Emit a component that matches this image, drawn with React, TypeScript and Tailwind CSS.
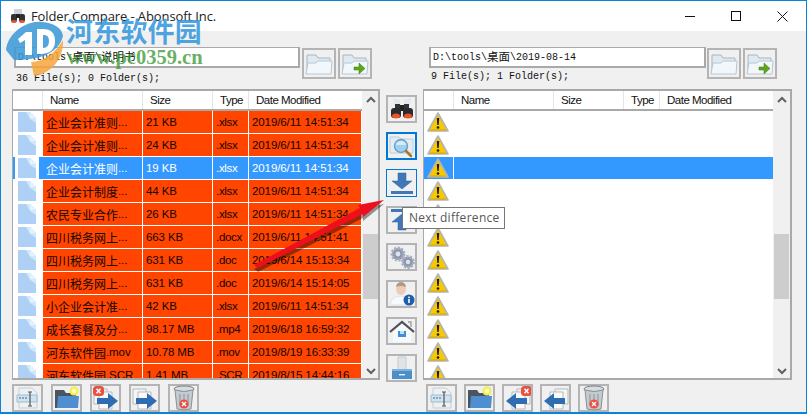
import React from "react";

const sans = "font-['Liberation_Sans','Noto_Sans_CJK_SC',sans-serif]";

const rows: [string, string, string, string][] = [
  ["企业会计准则...", "21 KB", ".xlsx", "2019/6/11 14:51:34"],
  ["企业会计准则...", "24 KB", ".xlsx", "2019/6/11 14:51:34"],
  ["企业会计准则...", "19 KB", ".xlsx", "2019/6/11 14:51:34"],
  ["企业会计制度...", "44 KB", ".xlsx", "2019/6/11 14:51:34"],
  ["农民专业合作...", "26 KB", ".xlsx", "2019/6/11 14:51:34"],
  ["四川税务网上...", "663 KB", ".docx", "2019/6/11 14:51:41"],
  ["四川税务网上...", "631 KB", ".doc", "2019/6/14 15:13:34"],
  ["四川税务网上...", "631 KB", ".doc", "2019/6/14 15:14:05"],
  ["小企业会计准...", "42 KB", ".xlsx", "2019/6/11 14:51:34"],
  ["成长套餐及分...", "98.17 MB", ".mp4", "2019/6/18 16:59:32"],
  ["河东软件园.mov", "10.78 MB", ".mov", "2019/8/19 16:33:39"],
  ["河东软件园.SCR", "1.41 MB", ".SCR", "2019/8/15 14:44:16"],
];

const grid = "grid grid-cols-[30px_100px_70px_36px_113px]";

function FileIcon() {
  return (
    <svg width="20" height="22" viewBox="0 0 20 22">
      <path d="M1 1h12l6 6v14H1z" fill="#aed0f4" />
      <path d="M9 1h4l6 6v5L13 8z" fill="#cfe8fb" />
      <path d="M13 1l6 6h-6z" fill="#e4f4fe" />
    </svg>
  );
}

function Warn() {
  return (
    <svg width="22" height="20" viewBox="0 0 22 20">
      <path d="M11 1L21 19H1z" fill="#f6c900" stroke="#b4b4b4" strokeWidth="1.6" strokeLinejoin="round" />
      <path d="M3 18h16" stroke="#d8a800" strokeWidth="1" />
      <path d="M9.8 6h2.4l-.5 7h-1.4z" fill="#1a1a1a" />
      <circle cx="11" cy="15.5" r="1.3" fill="#1a1a1a" />
    </svg>
  );
}

function Folder({ arrow }: { arrow?: boolean }) {
  return (
    <svg width="28" height="24" viewBox="0 0 28 24">
      <path d="M2 21V3h9l2 3h12v15z" fill="#dfe9f1" stroke="#a8b6c2" />
      <path d="M1 22l2-11h8l2-2h14l-1 13z" fill="#f2f7fb" stroke="#b8c6d2" />
      {arrow && <path d="M13 15h5v-4l6 5.5-6 5.5v-4h-5z" fill="#5fa51e" stroke="#3f7d10" strokeWidth="0.5" />}
    </svg>
  );
}

function Binoculars() {
  return (
    <svg width="24" height="24" viewBox="0 0 24 24">
      <path d="M3 1l7 2v5H4zM21 1l-7 2v5h6z" fill="#dfe8f0" />
      <path d="M5 7h5v5H5zM14 7h5v5h-5z" fill="#333" />
      <path d="M10 8h4v6h-4z" fill="#222" />
      <rect x="1" y="11" width="10" height="10" rx="3" fill="#2b2b2b" />
      <rect x="13" y="11" width="10" height="10" rx="3" fill="#2b2b2b" />
      <ellipse cx="6" cy="19" rx="4" ry="2.5" fill="#e8542b" />
      <ellipse cx="18" cy="19" rx="4" ry="2.5" fill="#e8542b" />
    </svg>
  );
}

function Magnifier() {
  return (
    <svg width="26" height="24" viewBox="0 0 26 24">
      <path d="M1 3h9l2 2h12v14H1z" fill="#e3ecf3" stroke="#c2ccd6" />
      <circle cx="12" cy="12" r="6.5" fill="#9fd0f3" stroke="#6d9fc5" strokeWidth="1.4" />
      <path d="M7 11a5 4 0 0 1 10 0z" fill="#d5edfb" />
      <path d="M17 17l5 5" stroke="#a8792f" strokeWidth="2.6" strokeLinecap="round" />
    </svg>
  );
}

function Down({ up }: { up?: boolean }) {
  return (
    <svg width="24" height="22" viewBox="0 0 24 22" className={up ? "rotate-180" : ""}>
      <path d="M8 1h8v8h6L12 17 2 9h6z" fill="#3f77b8" stroke="#2f639f" strokeWidth="0.5" />
      <path d="M1 19h22v3H1z" fill="#3f77b8" />
    </svg>
  );
}

function Gears() {
  return (
    <svg width="26" height="24" viewBox="0 0 26 24">
      <circle cx="9" cy="9" r="6" fill="#8f97ac" stroke="#a8afc0" strokeWidth="3" strokeDasharray="2 1.4" />
      <circle cx="9" cy="9" r="2.4" fill="#dfe3ea" />
      <circle cx="19" cy="17" r="5.5" fill="#8f97ac" stroke="#a8afc0" strokeWidth="3" strokeDasharray="2 1.4" />
      <circle cx="19" cy="17" r="2.2" fill="#dfe3ea" />
    </svg>
  );
}

function Person() {
  return (
    <svg width="26" height="24" viewBox="0 0 26 24">
      <ellipse cx="12" cy="7" rx="5" ry="6" fill="#e9cdb8" />
      <path d="M7 5a5 5 0 0 1 10 0q-5-2-10 0z" fill="#b09a86" />
      <path d="M1 23q1-9 11-9t10 9z" fill="#f7f9fb" stroke="#dde3e8" />
      <circle cx="20" cy="18" r="5.5" fill="#1f5ea8" />
      <rect x="19.2" y="17" width="1.6" height="4" fill="#fff" />
      <rect x="19.2" y="14.6" width="1.6" height="1.6" fill="#fff" />
    </svg>
  );
}

function Home() {
  return (
    <svg width="26" height="24" viewBox="0 0 26 24">
      <path d="M4 11l9-8 9 8v12H4z" fill="#f8f9fb" />
      <path d="M1 13L13 3l12 10" fill="none" stroke="#4b5258" strokeWidth="2.2" />
      <path d="M19 3h3v5" fill="none" stroke="#9aa0a6" strokeWidth="1.4" />
      <path d="M9 12h8v6H9z" fill="#3f8fd6" />
      <path d="M11 12h4v3h-4z" fill="#bfe0f7" />
    </svg>
  );
}

function Usb() {
  return (
    <svg width="22" height="24" viewBox="0 0 22 24">
      <path d="M7 1h8v13H7z" fill="#dfe3e6" stroke="#c5cacf" />
      <path d="M1 13h20v10H1z" fill="#4b8fc9" />
      <path d="M1 13h20v2H1z" fill="#7fb3dc" />
      <path d="M8 18h6v1.4H8z" fill="#e7f1f9" />
    </svg>
  );
}

function Rename() {
  return (
    <svg width="24" height="24" viewBox="0 0 24 24">
      <path d="M3 2h13l5 5v15H3z" fill="#eef1f3" stroke="#c8cdd1" />
      <path d="M1 9h20v7H1z" fill="#cfe3f0" stroke="#9fbcd0" />
      <path d="M3 12h8" stroke="#6f93ad" strokeWidth="1.4" strokeDasharray="2 1" />
      <path d="M14 6v14M12 6h4M12 20h4" stroke="#555" strokeWidth="1.2" />
    </svg>
  );
}

function NewFolder() {
  return (
    <svg width="26" height="24" viewBox="0 0 26 24">
      <path d="M1 22V4h9l2 3h10v15z" fill="#4a5560" />
      <path d="M3 22l1-12h21l-1 12z" fill="#4f8ed0" />
      <circle cx="20" cy="5" r="4.6" fill="#f3ec58" />
      <circle cx="20" cy="5" r="2.4" fill="#fdfbb0" />
    </svg>
  );
}

function Pages({ dir, x }: { dir: "left" | "right"; x?: boolean }) {
  const right = dir === "right";
  return (
    <svg width="26" height="24" viewBox="0 0 26 24">
      <g transform={right ? undefined : "translate(26 0) scale(-1 1)"}>
        <path d="M1 3h13v15H1z" fill="#f4f5f6" stroke="#b5b9bd" />
        <path d="M6 6h13v17H6z" fill="#fafafa" stroke="#b5b9bd" />
        <path d="M4 12h11V7l10 8-10 8v-5H4z" fill="#2f6db3" />
      </g>
      {x && (
        <g transform={right ? "translate(-1 0)" : "translate(15 0)"}>
          <rect x="1" y="0" width="11" height="10" rx="3.5" fill="#e9503f" />
          <path d="M4.5 2.7l4 4.6M8.5 2.7l-4 4.6" stroke="#fff" strokeWidth="1.5" />
        </g>
      )}
    </svg>
  );
}

function Trash() {
  return (
    <svg width="22" height="26" viewBox="0 0 22 26">
      <ellipse cx="11" cy="4" rx="10" ry="3" fill="#d9dde0" stroke="#7c8287" />
      <path d="M2 5l2 19q7 2 14 0l2-19q-9 3-18 0z" fill="#c4cbd0" stroke="#8b9196" />
      <path d="M7 9v12M11 9v13M15 9v12" stroke="#8b9196" />
      <circle cx="11" cy="19" r="4.6" fill="#e9503f" />
      <path d="M9 17l4 4M13 17l-4 4" stroke="#fff" strokeWidth="1.3" />
    </svg>
  );
}

function Btn({ children, w = "w-[31px]", h = "h-[28px]", cls = "border-[#b4b4b4] border-2" }: { children: React.ReactNode; w?: string; h?: string; cls?: string }) {
  return <div className={`${w} ${h} shrink-0 flex items-center justify-center bg-[#f0f0f0] ${cls}`}>{children}</div>;
}

function Header() {
  const cell = "flex items-center border-r border-[#e5e5e5] h-full pt-[2px]";
  return (
    <div className={`${grid} h-[18px] bg-white border-b-2 border-[#a9a9a9] box-content text-[11.5px] tracking-[-0.5px] text-[#111] leading-none`}>
      <div className={cell} />
      <div className={`${cell} pl-[7px]`}>Name</div>
      <div className={`${cell} pl-[7px]`}>Size</div>
      <div className={`${cell} pl-[7px]`}>Type</div>
      <div className="flex items-center pl-[7px] h-full pt-[2px]">Date Modified</div>
    </div>
  );
}

function Scrollbar() {
  return (
    <div className="w-[17px] shrink-0 bg-[#f0f0f0] flex flex-col items-center text-[#606060]">
      <svg width="10" height="8" viewBox="0 0 10 8" className="mt-[5px] shrink-0"><path d="M1 6l4-4 4 4" fill="none" stroke="#606060" strokeWidth="2" /></svg>
      <div className="w-[15px] h-[65px] bg-[#cdcdcd] mt-[130px] shrink-0" />
      <div className="flex-1" />
      <svg width="10" height="8" viewBox="0 0 10 8" className="mb-[3px] shrink-0"><path d="M1 2l4 4 4-4" fill="none" stroke="#606060" strokeWidth="2" /></svg>
    </div>
  );
}

function Name({ text }: { text: string }) {
  const i = text.search(/\.[.a-zA-Z]/);
  return (
    <>
      <span className="text-[12px] tracking-normal font-['Noto_Sans_CJK_SC',sans-serif]">{text.slice(0, i)}</span>
      <span>{text.slice(i)}</span>
    </>
  );
}

function LeftList() {
  return (
    <div className={`h-[291px] w-[368px] border-2 border-[#a9a9a9] border-l-1 flex overflow-hidden bg-white ${sans}`}>
      <div className="w-[349px] shrink-0 flex flex-col overflow-hidden">
        <Header />
        <div className="overflow-hidden flex-1">
          {rows.map((r, i) => {
            const sel = i === 2;
            const c = `${sel ? "bg-[#3399ff] text-white" : "bg-[#ff4500] text-[#140600]"} border-r border-b border-white flex items-center pl-[3px] pt-[1px] h-[23px] whitespace-nowrap overflow-hidden text-[11.5px] tracking-[-0.1px]`;
            return (
              <div key={i} className={grid}>
                <div className={`h-[23px] flex border-b border-white pl-[2px] pr-[4px] ${sel ? "bg-[#3399ff]" : ""}`}>
                  <div className="w-[24px] bg-white flex items-center justify-center"><FileIcon /></div>
                </div>
                <div className={c}><Name text={r[0]} /></div>
                <div className={c}>{r[1]}</div>
                <div className={`${c} tracking-[-0.3px]`}>{r[2]}</div>
                <div className={c}>{r[3]}</div>
              </div>
            );
          })}
        </div>
      </div>
      <Scrollbar />
    </div>
  );
}

function RightList() {
  return (
    <div className={`h-[291px] w-[369px] border-2 border-[#a9a9a9] border-l-1 flex overflow-hidden bg-white ${sans}`}>
      <div className="w-[349px] shrink-0 flex flex-col overflow-hidden">
        <Header />
        <div className="overflow-hidden flex-1">
          {rows.map((_, i) => (
            <div key={i} className={`${grid} h-[23px] border-b border-white ${i === 2 ? "bg-[#3399ff]" : "bg-white"}`}>
              <div className="flex items-center justify-center border-r border-white pr-[1px]"><Warn /></div>
            </div>
          ))}
        </div>
      </div>
      <Scrollbar />
    </div>
  );
}

const mono = "font-['Liberation_Mono','Noto_Sans_CJK_SC',monospace] text-[10px] text-[#111]";

export default function App() {
  return (
    <div className="relative w-[807px] h-[414px] overflow-hidden bg-[#f0f0f0] border border-b-2 border-[#0a84d8] flex flex-col">
      {/* title bar */}
      <div className="h-[30px] bg-white flex items-center shrink-0 pl-[9px]">
        <svg width="16" height="16" viewBox="0 0 16 16">
          <path d="M4 1h8v5H4z" fill="#ccd3d9" />
          <rect x="1" y="6" width="6" height="8" rx="2" fill="#333" />
          <rect x="9" y="6" width="6" height="8" rx="2" fill="#333" />
          <path d="M6 6h4v4H6z" fill="#222" />
          <ellipse cx="4" cy="13.5" rx="2.8" ry="1.6" fill="#e8542b" />
          <ellipse cx="12" cy="13.5" rx="2.8" ry="1.6" fill="#e8542b" />
        </svg>
        <span className="ml-[5px] mt-[1px] text-[13px] text-[#222] tracking-[-0.1px] font-['Open_Sans',sans-serif]">Folder Compare - Abonsoft Inc.</span>
        <div className="ml-auto flex items-center mr-[1px]">
          <div className="w-[46px] flex justify-center"><div className="w-[10px] h-px bg-[#111]" /></div>
          <div className="w-[46px] flex justify-center"><div className="w-[10px] h-[10px] border border-[#111]" /></div>
          <div className="w-[46px] flex justify-center">
            <svg width="11" height="11" viewBox="0 0 11 11"><path d="M.5.5l10 10M10.5.5l-10 10" stroke="#111" strokeWidth="1" /></svg>
          </div>
        </div>
      </div>

      {/* body */}
      <div className="flex flex-1 pl-[11px] min-h-0">
        {/* left column */}
        <div className="w-[368px] flex flex-col shrink-0 pt-[16px]">
          <div className="flex h-[42px] pl-[2px]">
            <div className="w-[286px] flex flex-col">
              <div className={`h-[21px] shrink-0 border-2 border-[#a9a9a9] border-t-1 bg-white flex items-center pl-[2px] ${mono}`}>D:\tools\<span className="text-[11.5px] font-['Noto_Sans_CJK_SC',sans-serif]">桌面</span>\<span className="text-[11.5px] font-['Noto_Sans_CJK_SC',sans-serif]">说明书</span></div>
              <div className={`pl-[2px] mt-[5px] leading-[12px] ${mono}`}>36 File(s); 0 Folder(s);</div>
            </div>
            <div className="flex gap-[2px] ml-[2px] mt-[1px]">
              <Btn w="w-[34px]" h="h-[31px]"><Folder /></Btn>
              <Btn w="w-[34px]" h="h-[31px]"><Folder arrow /></Btn>
            </div>
          </div>
          <LeftList />
          <div className="flex gap-[8px] mt-[4px]">
            <Btn><Rename /></Btn>
            <Btn><NewFolder /></Btn>
            <Btn><Pages dir="right" x /></Btn>
            <Btn><Pages dir="right" /></Btn>
            <Btn><Trash /></Btn>
          </div>
        </div>

        {/* middle column */}
        <div className="w-[31px] ml-[6px] shrink-0 flex flex-col gap-[9px] pt-[64px]">
          <Btn><Binoculars /></Btn>
          <Btn cls="border-2 border-[#0078d7]"><Magnifier /></Btn>
          <Btn cls="border-1 border-[#0078d7] bg-[#e5f1fb]"><Down /></Btn>
          <Btn><Down up /></Btn>
          <Btn><Gears /></Btn>
          <Btn><Person /></Btn>
          <Btn><Home /></Btn>
          <Btn><Usb /></Btn>
        </div>

        {/* right column */}
        <div className="w-[369px] ml-[6px] flex flex-col shrink-0 pt-[16px]">
          <div className="flex h-[42px] pl-[6px]">
            <div className="w-[277px] flex flex-col">
              <div className={`h-[21px] shrink-0 border-2 border-[#a9a9a9] border-t-1 bg-white flex items-center pl-[2px] ${mono}`}>D:\tools\<span className="text-[11.5px] font-['Noto_Sans_CJK_SC',sans-serif]">桌面</span>\2019-08-14</div>
              <div className={`pl-[2px] mt-[3px] leading-[12px] ${mono}`}>9 File(s); 1 Folder(s);</div>
            </div>
            <div className="flex gap-[2px] ml-[1px] mt-[1px]">
              <Btn w="w-[34px]" h="h-[31px]"><Folder /></Btn>
              <Btn w="w-[34px]" h="h-[31px]"><Folder arrow /></Btn>
            </div>
          </div>
          <RightList />
          <div className="flex gap-[7px] mt-[4px] pl-[3px]">
            <Btn><Rename /></Btn>
            <Btn><NewFolder /></Btn>
            <Btn><Pages dir="left" x /></Btn>
            <Btn><Pages dir="left" /></Btn>
            <Btn><Trash /></Btn>
          </div>
        </div>
      </div>

      {/* red annotation arrow */}
      <svg className="absolute left-[239px] top-[184px]" width="160" height="95" viewBox="0 0 160 95">
        <path d="M14 80L120 23L118 20L144 15L123 32L123 29L18 83Z" fill="#000" opacity="0.4" transform="translate(0 4)" />
        <path d="M14 80L120 23L118 20L144 15L123 32L123 29L18 83Z" fill="#ee0f1c" />
      </svg>

      {/* tooltip */}
      <div className="absolute left-[401px] top-[206px] w-[103px] h-[22px] bg-white border border-[#767676] flex items-center pl-[6px] text-[12px] text-[#575757] tracking-[0.3px] whitespace-nowrap font-['Open_Sans',sans-serif]">Next difference</div>

      {/* watermark */}
      <svg className="absolute left-[3px] top-[13px]" width="62" height="64" viewBox="0 0 62 64">
        <path d="M2 36C4 18 24 6 38 8C50 9 58 14 59 22C54 40 36 46 10 46Z" fill="#3d9ad8" opacity="0.88" />
        <path d="M59 26C60 46 46 60 30 62L27 48C40 48 52 38 59 26Z" fill="#f7a43a" opacity="0.85" />
        <path d="M22 18l-8 7 2 4 5-3v15h7V18z" fill="#fff" />
        <path d="M33 15h6q12 0 12 12t-13 13h-5zM39 21v13q6 0 6-7t-6-6z" fill="#fff" />
      </svg>
      <div className="absolute left-[65px] top-[13px] text-[27px] leading-[34px] font-bold text-[#2f95dc]/85 tracking-[0.2px] font-['Noto_Sans_CJK_SC',sans-serif]">河东软件园</div>
      <div className="absolute left-[66px] top-[44px] text-[20.5px] leading-[24px] font-bold text-[#3f9a3a]/80 font-['Liberation_Serif',serif]">www.pc0359.cn</div>
    </div>
  );
}
